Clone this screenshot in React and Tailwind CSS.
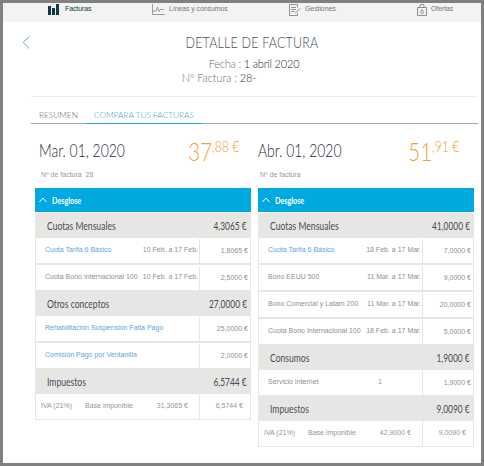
const body = "font-['Liberation_Sans',sans-serif]";

const cards = [
  {
    date: "Mar. 01, 2020",
    whole: "37",
    cents: ",88 €",
    headPad: "pl-[4px] pr-[12px]",
    invoicePad: "pl-[6px]",
    invoice: "Nº de factura  28",
    sections: [
      {
        title: "Cuotas Mensuales",
        total: "4,3065 €",
        rows: [
          { name: "Cuota Tarifa 6 Básico", period: "10 Feb. a 17 Feb.", value: "1,8065 €", link: true },
          { name: "Cuota Bono Internacional 100", period: "10 Feb. a 17 Feb.", value: "2,5000 €" },
        ],
      },
      {
        title: "Otros conceptos",
        total: "27,0000 €",
        rows: [
          { name: "Rehabilitación Suspensión Falta Pago", value: "25,0000 €", link: true },
          { name: "Comisión Pago por Ventanilla", value: "2,0000 €", link: true },
        ],
      },
      {
        title: "Impuestos",
        total: "6,5744 €",
        tax: { label: "IVA (21%)", base: "31,3065 €", value: "6,5744 €" },
      },
    ],
  },
  {
    date: "Abr. 01, 2020",
    whole: "51",
    cents: ",91 €",
    headPad: "pl-0 pr-[15px]",
    invoicePad: "pl-[2px]",
    invoice: "Nº de factura",
    sections: [
      {
        title: "Cuotas Mensuales",
        total: "41,0000 €",
        rows: [
          { name: "Cuota Tarifa 6 Básico", period: "18 Feb. a 17 Mar.", value: "7,0000 €", link: true },
          { name: "Bono EEUU 500", period: "11 Mar. a 17 Mar.", value: "9,0000 €" },
          { name: "Bono Comercial y Latam 200", period: "11 Mar. a 17 Mar.", value: "20,0000 €" },
          { name: "Cuota Bono Internacional 100", period: "18 Feb. a 17 Mar.", value: "5,0000 €" },
        ],
      },
      {
        title: "Consumos",
        total: "1,9000 €",
        rows: [{ name: "Servicio Internet", period: "1", center: true, value: "1,9000 €" }],
      },
      {
        title: "Impuestos",
        total: "9,0090 €",
        tax: { label: "IVA (21%)", base: "42,9000 €", value: "9,0090 €" },
      },
    ],
  },
];

function BarsIcon() {
  return (
    <svg className="mr-[2px]" width="11" height="11" viewBox="0 0 11 11" fill="#12384a">
      <rect x="0" y="2" width="3" height="9" />
      <rect x="4" y="4" width="3" height="7" />
      <rect x="8" y="0" width="3" height="11" />
    </svg>
  );
}

function LinesIcon() {
  return (
    <svg width="13" height="11" viewBox="0 0 13 11" fill="none" stroke="#777" strokeWidth="0.7">
      <path d="M0.5 0v10.5H13" />
      <path d="M0.5 7H4L5.5 3 7 7.5 8 5.5H12" />
    </svg>
  );
}

function GestionesIcon() {
  return (
    <svg width="12" height="12" viewBox="0 0 12 12" fill="none" stroke="#777" strokeWidth="0.8">
      <path d="M8.5 3.5V0.5H0.5V11.5H8.5V9" />
      <path d="M2 3.5H7M2 5.5H7M2 7.5H5.5M6 9L11.5 4.5" />
    </svg>
  );
}

function OfertasIcon() {
  return (
    <svg width="10" height="12" viewBox="0 0 10 12" fill="none" stroke="#777" strokeWidth="0.8">
      <path d="M0.5 3.5H9.5V11.5H0.5Z" />
      <path d="M3 3.5V1A1 1 0 0 1 4 0.5H6A1 1 0 0 1 7 1V3.5" />
      <path d="M5 5.5L5.6 7 7 7.2 6 8.2 6.2 9.6 5 9 3.8 9.6 4 8.2 3 7.2 4.4 7Z" strokeWidth="0.6" />
    </svg>
  );
}

function Chevron({ className, color, up }) {
  return (
    <svg className={className} viewBox="0 0 8 14" fill="none" stroke={color} strokeWidth="1">
      {up ? <path d="M0.5 9L4 5 7.5 9" /> : <path d="M7.5 0.5L1 7 7.5 13.5" />}
    </svg>
  );
}

function NavItem({ icon, label, active, className }) {
  return (
    <div className={`flex h-[11px] items-center gap-[4px] ${className}`}>
      {icon}
      <span className={`text-[7px] tracking-[-0.1px] ${active ? "text-[#12384a]" : "text-[#777]"}`}>{label}</span>
    </div>
  );
}

function DetailRow({ row }) {
  return (
    <div className={`${body} mx-px flex h-[25px] items-center bg-white text-[7px] text-[#8f8f8f]`}>
      <div className="flex min-w-0 flex-1 items-center pl-[9px] pr-px">
        <span className={`flex-1 whitespace-nowrap ${row.link ? "text-[#5da5dc]" : ""}`}>{row.name}</span>
        {row.period && (
          <span className={`whitespace-nowrap ${row.center ? "w-[55px] pr-[27px] text-center" : ""}`}>{row.period}</span>
        )}
      </div>
      <div className="flex h-[24px] w-[51px] items-center justify-end border-l border-[#e6e6e4] pr-[2px] pt-px">
        {row.value}
      </div>
    </div>
  );
}

function TaxRow({ tax }) {
  return (
    <div className={`${body} flex h-[26px] items-center border border-t-0 border-[#e6e6e4] bg-white text-[7px] text-[#9c958f]`}>
      <div className="flex flex-1 items-center pl-[5px] pr-[11px]">
        <span className="w-[44px]">{tax.label}</span>
        <span className="flex-1">Base imponible</span>
        <span>{tax.base}</span>
      </div>
      <div className="flex h-[25px] w-[51px] items-center justify-end border-l border-[#e6e6e4] pr-[7px]">{tax.value}</div>
    </div>
  );
}

function Section({ section }) {
  return (
    <div className="flex flex-col">
      <div className="flex h-[25px] items-center justify-between bg-[#e6e6e4] pl-[12px] pr-[4px] pt-[1px] text-[11px] text-[#4a4e52]">
        <span className="origin-left scale-x-[.78] whitespace-nowrap">{section.title}</span>
        <span className="origin-right scale-x-[.76] whitespace-nowrap">{section.total}</span>
      </div>
      {section.rows && (
        <div className="flex flex-col gap-[2px] bg-[#e6e6e4] pb-[1px]">
          {section.rows.map((row) => (
            <DetailRow key={row.name} row={row} />
          ))}
        </div>
      )}
      {section.tax && <TaxRow tax={section.tax} />}
    </div>
  );
}

function InvoiceCard({ card }) {
  return (
    <div className="w-[216px]">
      <div className={`flex h-[40px] items-center justify-between pt-[5px] ${card.headPad}`}>
        <span className="origin-left scale-x-[.82] whitespace-nowrap text-[17px] font-light text-[#1d2a3a]">{card.date}</span>
        <span className="flex origin-right scale-x-[.82] items-start whitespace-nowrap font-light text-[#f5a033]">
          <span className="text-[25px] leading-[28px]">{card.whole}</span>
          <span className="text-[15px] leading-[18px]">{card.cents}</span>
        </span>
      </div>
      <p className={`${body} ${card.invoicePad} mt-[2px] h-[18px] whitespace-pre text-[7px] leading-[10px] text-[#999]`}>{card.invoice}</p>
      <div className="flex h-[24px] items-center gap-[5px] bg-[#00a9e0] pl-[4px] text-[10px] font-bold text-white">
        <Chevron className="h-[14px] w-[8px]" color="#ffffff" up />
        <span className="origin-left scale-x-[.72]">Desglose</span>
      </div>
      <div className="mt-px flex flex-col">
        {card.sections.map((section) => (
          <Section key={section.title} section={section} />
        ))}
      </div>
    </div>
  );
}

export default function App() {
  return (
    <div className="h-[466px] w-[484px] overflow-hidden border-[3px] border-[#808080] bg-white font-['Lato',sans-serif]">
      <nav className={`${body} flex h-[19px] items-start bg-[#f3f3f2] pt-[1px]`}>
        <NavItem icon={<BarsIcon />} label="Facturas" active className="ml-[45px] w-[104px]" />
        <NavItem icon={<LinesIcon />} label="Líneas y consumos" className="w-[137px]" />
        <NavItem icon={<GestionesIcon />} label="Gestiones" className="w-[128px]" />
        <NavItem icon={<OfertasIcon />} label="Ofertas" />
      </nav>

      <header className="relative h-[74px] text-center">
        <Chevron className="absolute left-[19px] top-[14px] h-[13px] w-[8px]" color="#4aa3c7" />
        <h1 className="scale-x-[.83] pl-[24px] pt-[11px] text-[15px] font-light leading-[18px] tracking-[0.25px] text-[#4a5058]">DETALLE DE FACTURA</h1>
        <p className="mt-[6px] pl-[24px] text-[11px] font-light leading-[14px] tracking-[-0.2px] text-[#6f6f6f]">
          Fecha : <span className="text-[#222b3a]">1 abril 2020</span>
        </p>
        <p className="pr-[46px] text-[11px] font-light leading-[14px] tracking-[-0.1px] text-[#6f6f6f]">
          Nº Factura : <span className="text-[#222b3a]">28-</span>
        </p>
      </header>

      <div className="ml-[28px] mr-[3px]">
        <div className="flex h-[28px] items-end border-t border-b border-t-[#ececec] border-b-[#a8a8a8] text-[8.3px] font-light">
          <span className="px-[8px] pb-[2px] text-[#666]">RESUMEN</span>
          <span className="-mb-px border-b border-[#1a9fd8] px-[8px] pb-[2px] text-[#3d9fd3]">COMPARA TUS FACTURAS</span>
        </div>
      </div>

      <main className="ml-[32px] mt-[4px] flex items-start gap-[7px]">
        {cards.map((card) => (
          <InvoiceCard key={card.date} card={card} />
        ))}
      </main>
    </div>
  );
}
